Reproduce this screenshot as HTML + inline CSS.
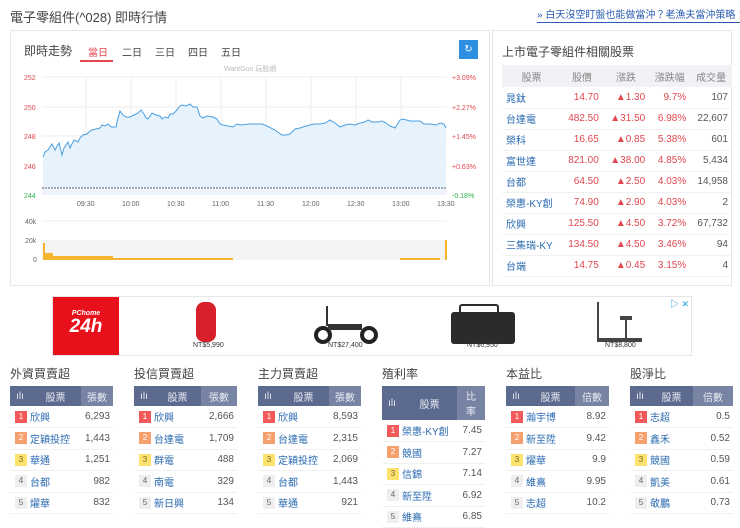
<!DOCTYPE html>
<html><head><meta charset="utf-8"><style>
*{margin:0;padding:0;box-sizing:border-box}
body{width:740px;height:524px;overflow:hidden;background:#fff;font-family:"Liberation Sans","Noto Sans CJK TC",sans-serif;color:#333;position:relative}
.abs{position:absolute}
.title{left:10px;top:7px;font-size:13px;color:#444}
.link{left:537px;top:9px;font-size:10px;color:#2a5db0;border-bottom:1px solid #2a5db0;white-space:nowrap;line-height:13px}
.box{border:1px solid #e4e6ea}
.rt table{border-collapse:collapse;font-size:10px}
.rt td,.rt th{height:21px;padding:0 4px;border-bottom:1px solid #f0f0f0;white-space:nowrap}
.rt th{font-weight:normal;color:#888;background:#f0f2f5;height:22px;border:none}
.r{color:#e0474f;text-align:right}
.n{color:#2a6ab0}
.panel{position:absolute;top:366px;width:103px;font-size:10px}
.panel h3{font-weight:normal;font-size:12px;color:#444;height:20px;line-height:16px}
.panel table{border-collapse:collapse;width:103px}
.panel th{background:#5b6a8e;color:#e8ebf2;font-weight:normal;height:20px}
.panel th.l{background:#7884a4}
.panel td{height:21.5px;border-bottom:1px solid #f0f0f0}
.b{display:inline-block;width:12px;height:12px;line-height:12px;text-align:center;font-size:8px;color:#fff;margin-left:5px}
.b1{background:#f05a5a}.b2{background:#f5a06e}.b3{background:#fde270;color:#7a6a20}.b4,.b5{background:#eee;color:#666}
.v{text-align:right;padding-right:3px;color:#555}
</style></head><body>
<div class="abs title">電子零組件(^028) 即時行情</div>
<div class="abs link">» 白天沒空盯盤也能做當沖？老漁夫當沖策略！...</div>

<div class="abs box" style="left:10px;top:30px;width:480px;height:256px"></div>
<div class="abs" style="left:24px;top:42px;font-size:12px;color:#444">即時走勢</div>
<div class="abs" style="left:88px;top:44px;font-size:10px;color:#e0474f">當日</div>
<div class="abs" style="left:80px;top:60px;width:33px;height:2px;background:#e0474f"></div>
<div class="abs" style="left:122px;top:44px;font-size:10px;color:#444">二日</div>
<div class="abs" style="left:155px;top:44px;font-size:10px;color:#444">三日</div>
<div class="abs" style="left:188px;top:44px;font-size:10px;color:#444">四日</div>
<div class="abs" style="left:221px;top:44px;font-size:10px;color:#444">五日</div>
<div class="abs" style="left:459px;top:40px;width:19px;height:19px;background:#2d8fe0;color:#fff;font-size:10px;text-align:center;line-height:19px">↻</div>

<svg class="abs" style="left:0;top:0" width="490" height="290" font-family="Liberation Sans" font-size="7">
<text x="224" y="71" fill="#bbb" font-size="7">WantGoo 玩股網</text>
<g stroke="#eee" stroke-width="1">
<line x1="42" y1="77" x2="447" y2="77"/><line x1="42" y1="107" x2="447" y2="107"/><line x1="42" y1="136" x2="447" y2="136"/><line x1="42" y1="166" x2="447" y2="166"/>
<line x1="86" y1="77" x2="86" y2="195"/><line x1="131" y1="77" x2="131" y2="195"/><line x1="176" y1="77" x2="176" y2="195"/><line x1="221" y1="77" x2="221" y2="195"/><line x1="266" y1="77" x2="266" y2="195"/><line x1="311" y1="77" x2="311" y2="195"/><line x1="356" y1="77" x2="356" y2="195"/><line x1="401" y1="77" x2="401" y2="195"/>
<line x1="42" y1="221" x2="447" y2="221"/>
</g>
<polygon fill="#e6f2fc" points="43,188 43,157 45,152 48,150 52,144 55,150 59,143 62,155 64,148 68,142 70,148 74,140 78,142 80,138 83,135 87,134 90,131 92,130 96,129 100,128 102,125 105,126 108,124 111,127 116,127 117,122 120,111 123,115 126,117 130,117 134,115 138,113 141,110 144,114 146,118 148,119 152,113 156,115 160,116 162,119 165,117 168,118 170,114 173,114 176,111 179,107 182,105 186,106 190,104 193,107 197,107 200,116 203,118 207,116 213,117 217,119 220,124 223,125 228,126 233,127 237,124 240,125 250,124 262,124 267,126 275,130 282,135 286,135 290,134 295,129 300,128 306,126 310,125 315,124 320,124 325,123 330,120 335,123 340,127 345,125 350,124 355,125 360,123 365,122 368,120 372,122 378,122 382,121 386,123 390,126 395,128 400,120 403,119 410,121 415,121 420,121 424,124 430,124 436,125 440,123 444,124 446,128 446,188"/>
<polyline fill="none" stroke="#4a9fe0" stroke-width="1" points="43,157 45,152 48,150 52,144 55,150 59,143 62,155 64,148 68,142 70,148 74,140 78,142 80,138 83,135 87,134 90,131 92,130 96,129 100,128 102,125 105,126 108,124 111,127 116,127 117,122 120,111 123,115 126,117 130,117 134,115 138,113 141,110 144,114 146,118 148,119 152,113 156,115 160,116 162,119 165,117 168,118 170,114 173,114 176,111 179,107 182,105 186,106 190,104 193,107 197,107 200,116 203,118 207,116 213,117 217,119 220,124 223,125 228,126 233,127 237,124 240,125 250,124 262,124 267,126 275,130 282,135 286,135 290,134 295,129 300,128 306,126 310,125 315,124 320,124 325,123 330,120 335,123 340,127 345,125 350,124 355,125 360,123 365,122 368,120 372,122 378,122 382,121 386,123 390,126 395,128 400,120 403,119 410,121 415,121 420,121 424,124 430,124 436,125 440,123 444,124 446,128"/>
<line x1="42" y1="188" x2="447" y2="188" stroke="#556" stroke-dasharray="2,1"/>
<rect x="42" y="189" width="405" height="6" fill="#eef4fa"/>
<g fill="#e0474f"><text x="24" y="80">252</text><text x="24" y="110">250</text><text x="24" y="139">248</text><text x="24" y="169">246</text>
<text x="452" y="80">+3.09%</text><text x="452" y="110">+2.27%</text><text x="452" y="139">+1.45%</text><text x="452" y="169">+0.63%</text></g>
<g fill="#2ab04a"><text x="24" y="198">244</text><text x="452" y="198">-0.18%</text></g>
<g fill="#666"><text x="77" y="206">09:30</text><text x="122" y="206">10:00</text><text x="167" y="206">10:30</text><text x="212" y="206">11:00</text><text x="257" y="206">11:30</text><text x="302" y="206">12:00</text><text x="347" y="206">12:30</text><text x="392" y="206">13:00</text><text x="437" y="206">13:30</text>
<text x="25" y="224">40k</text><text x="25" y="243">20k</text><text x="33" y="262">0</text></g>
<rect x="42" y="240" width="405" height="20" fill="#f3f3f3"/>
<rect x="43" y="243" width="2" height="17" fill="#f5b52e"/>
<rect x="45" y="253" width="8" height="7" fill="#f5b52e"/>
<rect x="53" y="256" width="60" height="4" fill="#f5b52e"/>
<rect x="113" y="258" width="120" height="2" fill="#f5b52e"/>
<rect x="400" y="258" width="40" height="2" fill="#f5b52e"/>
<rect x="445" y="240" width="2" height="20" fill="#f5b52e"/>
</svg>

<div class="abs box" style="left:492px;top:30px;width:240px;height:256px"></div>
<div class="abs" style="left:502px;top:43px;font-size:12px;color:#444">上市電子零組件相關股票</div>
<div class="abs rt" style="left:502px;top:65px">
<table style="width:230px">
<tr><th>股票</th><th>股價</th><th>漲跌</th><th>漲跌幅</th><th>成交量</th></tr>
<tr><td class="n">晁鈦</td><td class="r">14.70</td><td class="r">▲1.30</td><td class="r">9.7%</td><td class="v">107</td></tr>
<tr><td class="n">台達電</td><td class="r">482.50</td><td class="r">▲31.50</td><td class="r">6.98%</td><td class="v">22,607</td></tr>
<tr><td class="n">榮科</td><td class="r">16.65</td><td class="r">▲0.85</td><td class="r">5.38%</td><td class="v">601</td></tr>
<tr><td class="n">富世達</td><td class="r">821.00</td><td class="r">▲38.00</td><td class="r">4.85%</td><td class="v">5,434</td></tr>
<tr><td class="n">台都</td><td class="r">64.50</td><td class="r">▲2.50</td><td class="r">4.03%</td><td class="v">14,958</td></tr>
<tr><td class="n">榮惠-KY創</td><td class="r">74.90</td><td class="r">▲2.90</td><td class="r">4.03%</td><td class="v">2</td></tr>
<tr><td class="n">欣興</td><td class="r">125.50</td><td class="r">▲4.50</td><td class="r">3.72%</td><td class="v">67,732</td></tr>
<tr><td class="n">三集瑞-KY</td><td class="r">134.50</td><td class="r">▲4.50</td><td class="r">3.46%</td><td class="v">94</td></tr>
<tr><td class="n">台端</td><td class="r">14.75</td><td class="r">▲0.45</td><td class="r">3.15%</td><td class="v">4</td></tr>
</table></div>

<div class="abs" style="left:52px;top:296px;width:640px;height:60px;border:1px solid #e6e6e6"></div>
<div class="abs" style="left:53px;top:297px;width:66px;height:58px;background:#e8101a;color:#fff;text-align:center">
<div style="font-size:7px;font-style:italic;font-weight:bold;margin-top:13px">PChome</div>
<div style="font-size:19px;font-style:italic;font-weight:bold;line-height:20px">24h</div></div>
<div class="abs" style="left:196px;top:302px;width:20px;height:40px;background:#d8202a;border-radius:8px"></div>
<div class="abs" style="left:314px;top:316px;width:64px;height:28px"><div style="position:absolute;left:0;top:10px;width:18px;height:18px;border:4px solid #222;border-radius:50%"></div><div style="position:absolute;right:0;top:10px;width:18px;height:18px;border:4px solid #222;border-radius:50%"></div><div style="position:absolute;left:14px;top:8px;width:34px;height:6px;background:#333"></div><div style="position:absolute;left:12px;top:-10px;width:2px;height:20px;background:#333"></div></div>
<div class="abs" style="left:451px;top:312px;width:64px;height:32px;background:#2b2b2b;border-radius:3px"></div>
<div class="abs" style="left:459px;top:304px;width:40px;height:10px;border:2px solid #2b2b2b;border-bottom:none;border-radius:3px 3px 0 0"></div>
<div class="abs" style="left:597px;top:302px;width:2px;height:40px;background:#444"></div>
<div class="abs" style="left:598px;top:338px;width:44px;height:4px;background:#444"></div>
<div class="abs" style="left:625px;top:318px;width:2px;height:22px;background:#444"></div>
<div class="abs" style="left:620px;top:316px;width:12px;height:4px;background:#444"></div>
<div class="abs" style="left:193px;top:342px;font-size:7px;color:#333">NT$5,990</div>
<div class="abs" style="left:328px;top:342px;font-size:7px;color:#333">NT$27,400</div>
<div class="abs" style="left:467px;top:342px;font-size:7px;color:#333">NT$6,950</div>
<div class="abs" style="left:605px;top:342px;font-size:7px;color:#333">NT$8,800</div>
<div class="abs" style="left:670px;top:297px;font-size:9px;color:#1aa0e0">▷ ✕</div>

<div class="panel" style="left:10px"><h3>外資買賣超</h3><table>
<tr><th style="width:20px">ılı</th><th>股票</th><th class="l" style="width:32px">張數</th></tr>
<tr><td><span class="b b1">1</span></td><td class="n">欣興</td><td class="v">6,293</td></tr>
<tr><td><span class="b b2">2</span></td><td class="n">定穎投控</td><td class="v">1,443</td></tr>
<tr><td><span class="b b3">3</span></td><td class="n">華通</td><td class="v">1,251</td></tr>
<tr><td><span class="b b4">4</span></td><td class="n">台都</td><td class="v">982</td></tr>
<tr><td><span class="b b5">5</span></td><td class="n">燿華</td><td class="v">832</td></tr></table></div>

<div class="panel" style="left:134px"><h3>投信買賣超</h3><table>
<tr><th style="width:20px">ılı</th><th>股票</th><th class="l" style="width:36px">張數</th></tr>
<tr><td><span class="b b1">1</span></td><td class="n">欣興</td><td class="v">2,666</td></tr>
<tr><td><span class="b b2">2</span></td><td class="n">台達電</td><td class="v">1,709</td></tr>
<tr><td><span class="b b3">3</span></td><td class="n">群電</td><td class="v">488</td></tr>
<tr><td><span class="b b4">4</span></td><td class="n">南電</td><td class="v">329</td></tr>
<tr><td><span class="b b5">5</span></td><td class="n">新日興</td><td class="v">134</td></tr></table></div>

<div class="panel" style="left:258px"><h3>主力買賣超</h3><table>
<tr><th style="width:20px">ılı</th><th>股票</th><th class="l" style="width:32px">張數</th></tr>
<tr><td><span class="b b1">1</span></td><td class="n">欣興</td><td class="v">8,593</td></tr>
<tr><td><span class="b b2">2</span></td><td class="n">台達電</td><td class="v">2,315</td></tr>
<tr><td><span class="b b3">3</span></td><td class="n">定穎投控</td><td class="v">2,069</td></tr>
<tr><td><span class="b b4">4</span></td><td class="n">台都</td><td class="v">1,443</td></tr>
<tr><td><span class="b b5">5</span></td><td class="n">華通</td><td class="v">921</td></tr></table></div>

<div class="panel" style="left:382px"><h3>殖利率</h3><table>
<tr><th style="width:20px;height:34px">ılı</th><th>股票</th><th class="l" style="width:28px">比<br>率</th></tr>
<tr><td><span class="b b1">1</span></td><td class="n">榮惠-KY創</td><td class="v">7.45</td></tr>
<tr><td><span class="b b2">2</span></td><td class="n">競國</td><td class="v">7.27</td></tr>
<tr><td><span class="b b3">3</span></td><td class="n">信錦</td><td class="v">7.14</td></tr>
<tr><td><span class="b b4">4</span></td><td class="n">新至陞</td><td class="v">6.92</td></tr>
<tr><td><span class="b b5">5</span></td><td class="n">維熹</td><td class="v">6.85</td></tr></table></div>

<div class="panel" style="left:506px"><h3>本益比</h3><table>
<tr><th style="width:20px">ılı</th><th>股票</th><th class="l" style="width:34px">倍數</th></tr>
<tr><td><span class="b b1">1</span></td><td class="n">瀚宇博</td><td class="v">8.92</td></tr>
<tr><td><span class="b b2">2</span></td><td class="n">新至陞</td><td class="v">9.42</td></tr>
<tr><td><span class="b b3">3</span></td><td class="n">燿華</td><td class="v">9.9</td></tr>
<tr><td><span class="b b4">4</span></td><td class="n">維熹</td><td class="v">9.95</td></tr>
<tr><td><span class="b b5">5</span></td><td class="n">志超</td><td class="v">10.2</td></tr></table></div>

<div class="panel" style="left:630px"><h3>股淨比</h3><table>
<tr><th style="width:20px">ılı</th><th>股票</th><th class="l" style="width:40px">倍數</th></tr>
<tr><td><span class="b b1">1</span></td><td class="n">志超</td><td class="v">0.5</td></tr>
<tr><td><span class="b b2">2</span></td><td class="n">鑫禾</td><td class="v">0.52</td></tr>
<tr><td><span class="b b3">3</span></td><td class="n">競國</td><td class="v">0.59</td></tr>
<tr><td><span class="b b4">4</span></td><td class="n">凱美</td><td class="v">0.61</td></tr>
<tr><td><span class="b b5">5</span></td><td class="n">敬鵬</td><td class="v">0.73</td></tr></table></div>
</body></html>
